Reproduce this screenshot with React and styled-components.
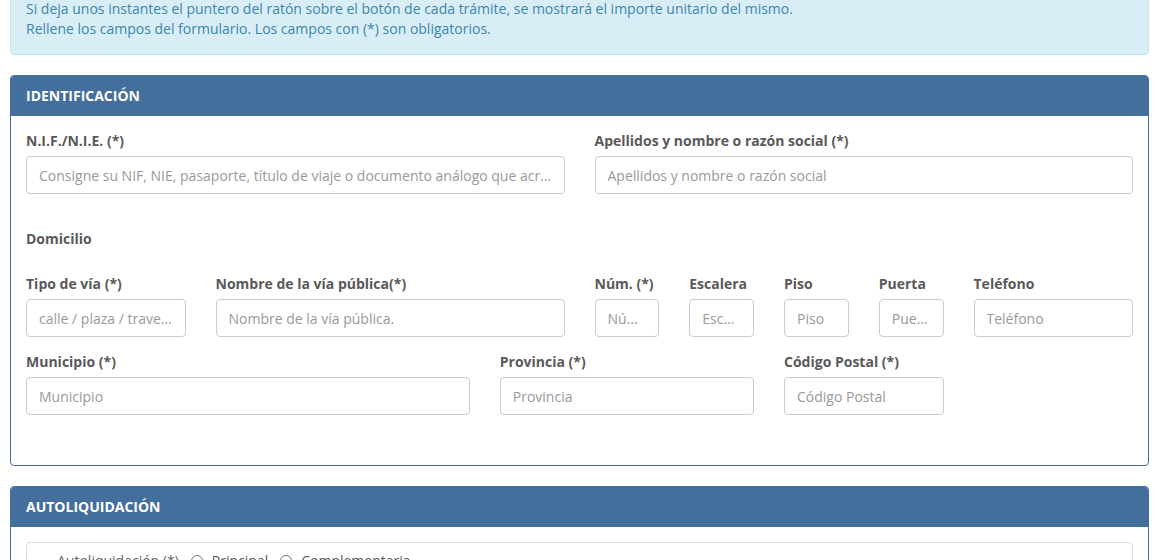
import React from "react";
import styled, { createGlobalStyle } from "styled-components";

const GlobalStyle = createGlobalStyle`
  body {
    margin: 0;
    background: #fff;
    font-family: "Open Sans", "Liberation Sans", sans-serif;
    font-size: 14px;
    line-height: 20px;
    color: #666;
  }
  * { box-sizing: border-box; }
`;

const Page = styled.div`
  width: 1139px;
  margin: -17px 0 0 10px;
`;

const Alert = styled.div`
  background: #d9edf7;
  border: 1px solid #bce8f1;
  border-radius: 4px;
  color: #3a87ad;
  padding: 15px;
  margin-bottom: 20px;
  p {
    margin: 0;
  }
`;

const Panel = styled.section`
  border: 1px solid #446e9b;
  border-radius: 4px;
  margin-bottom: 20px;
  background: #fff;
`;

const PanelHeading = styled.div`
  background: #446e9b;
  color: #fff;
  padding: 10px 15px;
  font-weight: 700;
  font-size: 14px;
  line-height: 20px;
  text-transform: uppercase;
  border-radius: 3px 3px 0 0;
`;

const PanelBody = styled.div`
  padding: 15px 15px ${(p) => p.$bottom || 15}px;
`;

const Row = styled.div`
  display: grid;
  grid-template-columns: repeat(12, 1fr);
  column-gap: 30px;
`;

const Field = styled.div`
  grid-column: span ${(p) => p.$span};
  margin-bottom: 15px;
  min-width: 0;
`;

const Label = styled.label`
  display: block;
  font-weight: 700;
  color: #595959;
  margin-bottom: 5px;
`;

const Input = styled.input`
  display: block;
  width: 100%;
  height: 38px;
  padding: 8px 12px;
  font-family: inherit;
  font-size: 14px;
  color: #555;
  border: 1px solid #ccc;
  border-radius: 4px;
  background: #fff;
  text-overflow: ellipsis;
  &::placeholder {
    color: #999;
  }
`;

const SubHeading = styled.div`
  font-weight: 700;
  color: #595959;
  margin: 20px 0 25px;
`;

const Well = styled.div`
  border: 1px solid #ddd;
  border-radius: 4px;
  padding: 8px 30px 20px;
  display: flex;
  align-items: center;
  gap: 12px;
`;

const RadioLabel = styled.label`
  display: inline-flex;
  align-items: center;
  gap: 9px;
  color: #595959;
  input {
    margin: 0;
    width: 12px;
    height: 12px;
  }
`;

const FormField = ({ span, label, placeholder }) => (
  <Field $span={span}>
    <Label>{label}</Label>
    <Input placeholder={placeholder} />
  </Field>
);

export default function App() {
  return (
    <>
      <GlobalStyle />
      <Page>
        <Alert>
          <p>
            Si deja unos instantes el puntero del ratón sobre el botón de cada
            trámite, se mostrará el importe unitario del mismo.
          </p>
          <p>
            Rellene los campos del formulario. Los campos con (*) son
            obligatorios.
          </p>
        </Alert>

        <Panel>
          <PanelHeading>Identificación</PanelHeading>
          <PanelBody $bottom={35}>
            <Row>
              <FormField
                span={6}
                label="N.I.F./N.I.E. (*)"
                placeholder="Consigne su NIF, NIE, pasaporte, título de viaje o documento análogo que acredite su identidad"
              />
              <FormField
                span={6}
                label="Apellidos y nombre o razón social (*)"
                placeholder="Apellidos y nombre o razón social"
              />
            </Row>
            <SubHeading>Domicilio</SubHeading>
            <Row>
              <FormField span={2} label="Tipo de vía (*)" placeholder="calle / plaza / travesía" />
              <FormField span={4} label="Nombre de la vía pública(*)" placeholder="Nombre de la vía pública." />
              <FormField span={1} label="Núm. (*)" placeholder="Número" />
              <FormField span={1} label="Escalera" placeholder="Escalera" />
              <FormField span={1} label="Piso" placeholder="Piso" />
              <FormField span={1} label="Puerta" placeholder="Puerta" />
              <FormField span={2} label="Teléfono" placeholder="Teléfono" />
            </Row>
            <Row>
              <FormField span={5} label="Municipio (*)" placeholder="Municipio" />
              <FormField span={3} label="Provincia (*)" placeholder="Provincia" />
              <FormField span={2} label="Código Postal (*)" placeholder="Código Postal" />
            </Row>
          </PanelBody>
        </Panel>

        <Panel>
          <PanelHeading>Autoliquidación</PanelHeading>
          <PanelBody>
            <Well>
              <span>Autoliquidación (*)</span>
              <RadioLabel>
                <input type="radio" name="auto" /> Principal
              </RadioLabel>
              <RadioLabel>
                <input type="radio" name="auto" /> Complementaria
              </RadioLabel>
            </Well>
          </PanelBody>
        </Panel>
      </Page>
    </>
  );
}
